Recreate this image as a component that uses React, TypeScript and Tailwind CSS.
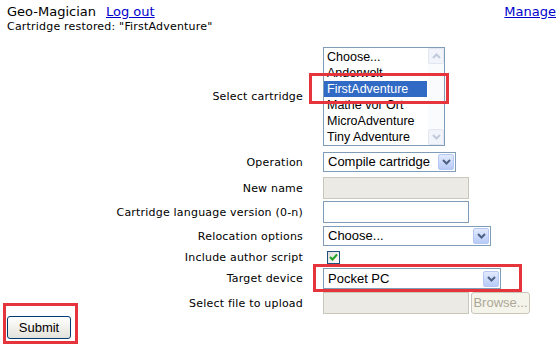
import React from 'react';

const labelCls = "w-[303px] shrink-0 text-right text-[11px] leading-[13px] tracking-[0.2px] text-black";
const ctrlFont = { fontFamily: '"Liberation Sans", Arial, sans-serif' };

function Chevron({ color = '#4d6185' }: { color?: string }) {
  return (
    <svg width="9" height="6" viewBox="0 0 9 6">
      <path d="M1 1 L4.5 4.5 L8 1" fill="none" stroke={color} strokeWidth="2" />
    </svg>
  );
}

function ArrowButton() {
  return (
    <div className="flex h-[16px] w-[16px] shrink-0 items-center justify-center rounded-[2px] border border-[#b5c7f3] bg-gradient-to-b from-[#e1eafe] to-[#b8cbf7]">
      <Chevron />
    </div>
  );
}

function FakeSelect({ value, width, height }: { value: string; width: string; height: string }) {
  return (
    <div
      className={`flex items-center justify-between border border-[#7f9db9] bg-white pl-[4px] pr-[1px] text-[13px] text-black ${width} ${height}`}
      style={ctrlFont}
    >
      <span>{value}</span>
      <ArrowButton />
    </div>
  );
}

const cartridges = ['Choose...', 'Anderwolt', 'FirstAdventure', 'Mathe vor Ort', 'MicroAdventure', 'Tiny Adventure'];

function Listbox() {
  return (
    <div className="flex h-[99px] w-[122px] border border-[#7f9db9] bg-white" style={ctrlFont}>
      <div className="flex-1 pt-[1px]">
        {cartridges.map((c) => (
          <div
            key={c}
            className={`mr-[1px] h-[16px] pl-[3px] text-[12.5px] leading-[16px] ${
              c === 'FirstAdventure' ? 'bg-[#316ac5] text-white' : 'text-black'
            }`}
          >
            {c}
          </div>
        ))}
      </div>
      <div className="flex w-[16px] flex-col justify-between bg-[#fafbfd]">
        <div className="flex h-[16px] items-center justify-center rounded-[2px] border border-[#e1e6f2] bg-[#f1f4fb]">
          <svg width="9" height="6" viewBox="0 0 9 6">
            <path d="M1 5 L4.5 1.5 L8 5" fill="none" stroke="#c2c9d8" strokeWidth="2" />
          </svg>
        </div>
        <div className="flex h-[16px] items-center justify-center rounded-[2px] border border-[#e1e6f2] bg-[#f1f4fb]">
          <Chevron color="#c2c9d8" />
        </div>
      </div>
    </div>
  );
}

export default function App() {
  return (
    <div
      className="relative h-[350px] w-[557px] overflow-hidden bg-white text-black"
      style={{ fontFamily: '"DejaVu Sans", Verdana, sans-serif' }}
    >
      {/* header */}
      <div className="flex items-start justify-between pl-[7px] pr-[1px] pt-[3px]">
        <div className="text-[13px] leading-[17px]">
          Geo-Magician
          <a href="#" className="ml-[10px] text-[#0000cc] underline">Log out</a>
        </div>
        <a href="#" className="text-[13px] leading-[17px] text-[#0000cc] underline">Manage</a>
      </div>
      <div className="pl-[7px] text-[11px] leading-[14px] tracking-[0.2px]">Cartridge restored: "FirstAdventure"</div>

      {/* form */}
      <div className="mt-[13px] flex flex-col">
        <div className="flex items-center gap-[20px]">
          <div className={labelCls}>Select cartridge</div>
          <Listbox />
        </div>
        <div className="mt-[6px] flex items-center gap-[20px]">
          <div className={labelCls}>Operation</div>
          <FakeSelect value="Compile cartridge" width="w-[133px]" height="h-[20px]" />
        </div>
        <div className="mt-[5px] flex items-center gap-[20px]">
          <div className={labelCls}>New name</div>
          <div className="h-[22px] w-[146px] border border-[#c9c7ba] bg-[#ebeae4]" />
        </div>
        <div className="mt-[2px] flex items-center gap-[20px]">
          <div className={labelCls}>Cartridge language version (0-n)</div>
          <div className="h-[22px] w-[146px] border border-[#7f9db9] bg-white" />
        </div>
        <div className="mt-[3px] flex items-center gap-[20px]">
          <div className={labelCls}>Relocation options</div>
          <FakeSelect value="Choose..." width="w-[168px]" height="h-[20px]" />
        </div>
        <div className="mt-[5px] flex items-center gap-[20px]">
          <div className={labelCls}>Include author script</div>
          <div className="ml-[4px] flex h-[13px] w-[13px] items-center justify-center border border-[#1c5180] bg-gradient-to-br from-[#dcdcd7] to-white">
            <svg width="9" height="9" viewBox="0 0 9 9">
              <path d="M1 4 L3.5 6.5 L8 1.5" fill="none" stroke="#21a121" strokeWidth="2" />
            </svg>
          </div>
        </div>
        <div className="mt-[4px] flex items-center gap-[20px]">
          <div className={labelCls}>Target device</div>
          <FakeSelect value="Pocket PC" width="w-[178px]" height="h-[21px]" />
        </div>
        <div className="mt-[3px] flex items-center gap-[20px]">
          <div className={labelCls}>Select file to upload</div>
          <div className="flex items-center gap-[2px]">
            <div className="h-[22px] w-[146px] border border-[#c9c7ba] bg-[#ebeae4]" />
            <div
              className="flex h-[22px] w-[59px] items-center justify-center rounded-[3px] border border-[#c9c7ba] bg-[#f5f4ea] text-[13px] text-[#aca899]"
              style={ctrlFont}
            >
              Browse...
            </div>
          </div>
        </div>
        <div className="mt-[2px] pl-[7px]">
          <button
            className="flex h-[23px] w-[64px] items-center justify-center rounded-[3px] border border-[#003c74] bg-gradient-to-b from-white to-[#e3e2da] text-[13px] text-black"
            style={ctrlFont}
          >
            Submit
          </button>
        </div>
      </div>

      {/* red highlight overlays */}
      <div className="pointer-events-none absolute left-[309px] top-[73px] h-[31px] w-[140px] border-[3px] border-[#e5343c]" />
      <div className="pointer-events-none absolute left-[313px] top-[264px] h-[28px] w-[209px] border-[3px] border-[#e5343c]" />
      <div className="pointer-events-none absolute left-[3px] top-[303px] h-[41px] w-[75px] border-[3px] border-[#e5343c]" />
    </div>
  );
}
